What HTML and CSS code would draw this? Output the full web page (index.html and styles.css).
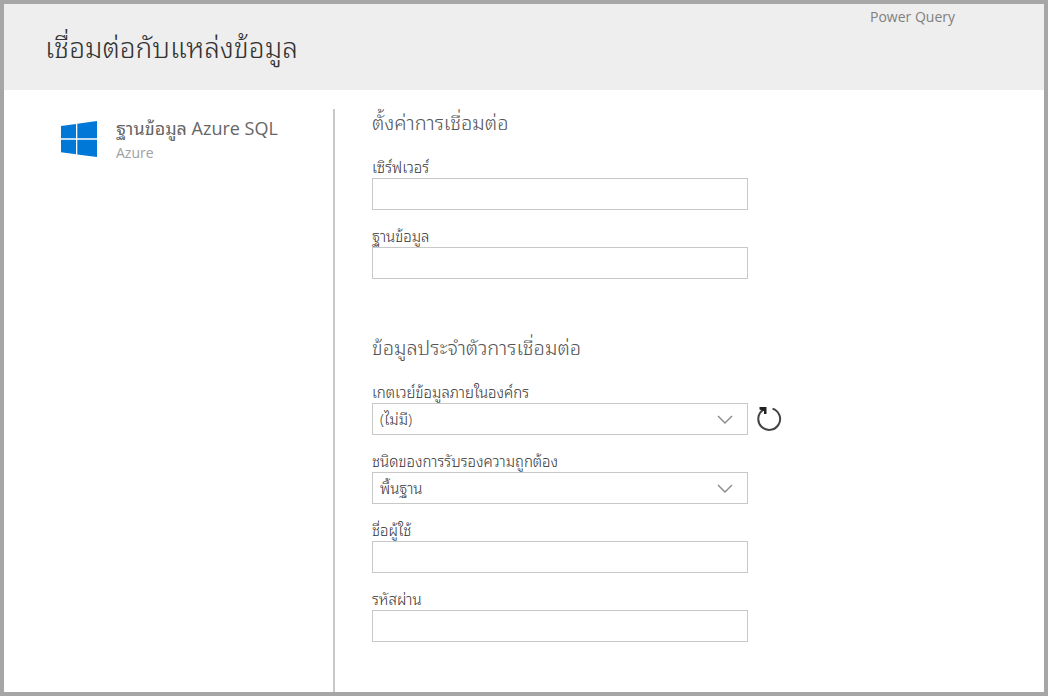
FILE: index.html
```
<!DOCTYPE html>
<html lang="th">
<head>
<meta charset="utf-8">
<title>Power Query</title>
<link rel="stylesheet" href="styles.css">
</head>
<body>
<div class="window">
  <header class="header">
    <h1 class="title">เชื่อมต่อกับแหล่งข้อมูล</h1>
    <span class="brand">Power Query</span>
  </header>
  <main class="content">
    <aside class="source">
      <svg class="source-logo" width="36" height="36" viewBox="0 0 36 36" aria-hidden="true">
        <path fill="#0078d7" d="M0 5 15 2.900V17.300H0ZM16.300 2.700 36 0V17.300H16.300ZM0 18.700H15V33.300L0 31.200ZM16.300 18.700H36V36L16.300 33.500Z"/>
      </svg>
      <div class="source-text">
        <div class="source-name">ฐานข้อมูล Azure SQL</div>
        <div class="source-kind">Azure</div>
      </div>
    </aside>
    <form class="form">
      <section class="section">
        <h2 class="section-title">ตั้งค่าการเชื่อมต่อ</h2>
        <div class="field">
          <label class="label" for="server">เซิร์ฟเวอร์</label>
          <input class="control" id="server" type="text">
        </div>
        <div class="field">
          <label class="label" for="database">ฐานข้อมูล</label>
          <input class="control" id="database" type="text">
        </div>
      </section>
      <section class="section">
        <h2 class="section-title">ข้อมูลประจำตัวการเชื่อมต่อ</h2>
        <div class="field">
          <label class="label" for="gateway">เกตเวย์ข้อมูลภายในองค์กร</label>
          <div class="row">
            <div class="select">
              <select class="control" id="gateway"><option>(ไม่มี)</option></select>
              <svg class="chevron" width="16" height="10" viewBox="0 0 16 10" aria-hidden="true"><path d="M1 1 8 8 15 1"/></svg>
            </div>
            <button class="refresh" type="button" aria-label="รีเฟรช">
              <svg width="26" height="26" viewBox="0 0 26 26" aria-hidden="true"><path class="refresh-arc" d="M16.500 2.600A10.900 10.900 0 1 1 7.500 3.700"/><path class="refresh-head" d="M3.500 1H10.500V8H8V5L3.500 3.500Z"/></svg>
            </button>
          </div>
        </div>
        <div class="field">
          <label class="label" for="auth">ชนิดของการรับรองความถูกต้อง</label>
          <div class="select">
            <select class="control" id="auth"><option>พื้นฐาน</option></select>
            <svg class="chevron" width="16" height="10" viewBox="0 0 16 10" aria-hidden="true"><path d="M1 1 8 8 15 1"/></svg>
          </div>
        </div>
        <div class="field">
          <label class="label" for="user">ชื่อผู้ใช้</label>
          <input class="control" id="user" type="text">
        </div>
        <div class="field">
          <label class="label" for="password">รหัสผ่าน</label>
          <input class="control" id="password" type="password">
        </div>
      </section>
    </form>
  </main>
</div>
</body>
</html>
```
FILE: styles.css
```
* { box-sizing: border-box; }
body { margin: 0; font-family: "Open Sans", "Noto Sans Thai Looped", "Noto Looped Thai", "Loma", "Noto Sans Thai", sans-serif; font-weight: 300; color: #333; }
.window { min-height: 100vh; display: flex; flex-direction: column; border: 4px solid #a6a6a6; background: #fff; }
.header { display: flex; justify-content: space-between; height: 86px; padding: 0 89px 0 41px; background: #eee; }
.title { margin: 0; font-size: 28px; font-weight: 300; line-height: 86px; }
.brand { font-size: 14px; line-height: 26px; font-weight: 400; color: #808080; }
.content { flex: 1; display: flex; padding-top: 19px; }
.source { flex: 0 0 331px; display: flex; gap: 19px; padding: 7px 0 0 57px; border-right: 2px solid #c8c8c8; }
.source-logo { margin-top: 5px; }
.source-name { font-size: 18px; line-height: 24px; font-weight: 400; color: #666; }
.source-kind { font-size: 14px; line-height: 26px; font-weight: 400; color: #a0a0a0; }
.form { flex: 1; padding: 0 20px 16px 37px; }
.section + .section { margin-top: 55px; }
.section-title { margin: 0 0 19px; font-size: 20px; font-weight: 300; line-height: 28px; color: #555; }
.field { margin-bottom: 15px; }
.label { display: block; font-size: 15px; line-height: 22px; }
.control { display: block; width: 100%; max-width: 376px; height: 32px; padding: 0 7px; border: 1px solid #c8c8c8; border-radius: 0; background: #fff; font: inherit; font-size: 15px; color: #333; appearance: none; }
.row { display: flex; gap: 8px; align-items: center; }
.select { position: relative; width: 100%; max-width: 376px; }
.chevron { position: absolute; right: 15px; top: 12px; fill: none; stroke: #888; stroke-width: 1.4; pointer-events: none; }
.refresh { display: flex; padding: 0; border: 0; background: none; }
.refresh-arc { fill: none; stroke: #444; stroke-width: 2; }
.refresh-head { fill: #222; }
```
